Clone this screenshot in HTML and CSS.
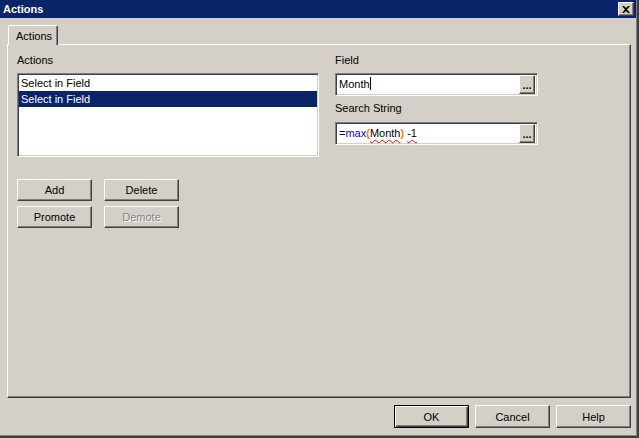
FILE: index.html
```html
<!DOCTYPE html>
<html lang="en">
<head>
  <meta charset="UTF-8">
  <title>Actions</title>
  <link rel="stylesheet" href="styles.css">
</head>
<body>
  <div class="window">
    <div class="titlebar">
      <span class="title">Actions</span>
      <button class="close" type="button">
        <svg width="8" height="7" viewBox="0 0 8 7"><path d="M0 0h2l2 2 2-2h2L5 3.5 8 7H6L4 5 2 7H0l3-3.5z" fill="#000"/></svg>
      </button>
    </div>

    <div class="body">
      <div class="tabs">
        <div class="tab">Actions</div>
      </div>

      <div class="panel">
        <div class="col-left">
          <div class="label">Actions</div>
          <div class="listbox">
            <div class="item">Select in Field</div>
            <div class="item selected">Select in Field</div>
          </div>
          <div class="btn-grid">
            <button class="btn" type="button">Add</button>
            <button class="btn" type="button">Delete</button>
            <button class="btn" type="button">Promote</button>
            <button class="btn" type="button" disabled>Demote</button>
          </div>
        </div>

        <div class="col-right">
          <div class="label">Field</div>
          <div class="field">
            <div class="field-text">Month<span class="caret"></span></div>
            <button class="dots" type="button">...</button>
          </div>
          <div class="label label-gap">Search String</div>
          <div class="field">
            <div class="field-text">=<span class="fn">max</span><span class="paren">(</span><span class="squiggle">Month</span><span class="paren">)</span> <span class="squiggle">-1</span></div>
            <button class="dots" type="button">...</button>
          </div>
        </div>
      </div>

      <div class="footer">
        <button class="btn default" type="button">OK</button>
        <button class="btn" type="button">Cancel</button>
        <button class="btn" type="button">Help</button>
      </div>
    </div>
  </div>
</body>
</html>
```

FILE: styles.css
```css
* {
  box-sizing: border-box;
}
html, body {
  margin: 0;
  padding: 0;
}
body {
  font-family: "Liberation Sans", Arial, sans-serif;
  font-size: 11px;
  color: #000;
  background: #d4d0c8;
}
.window {
  width: 639px;
  height: 438px;
  background: #d4d0c8;
  padding-right: 3px;
  box-shadow: inset -2px -2px #404040, inset -3px -3px #808080;
}
.titlebar {
  height: 18px;
  background: #0a246a;
  display: flex;
  align-items: center;
  justify-content: space-between;
  padding: 0 2px 0 3px;
}
.title {
  color: #fff;
  font-weight: bold;
  font-size: 11px;
}
.close {
  width: 16px;
  height: 14px;
  padding: 0;
  margin: 0;
  background: #d4d0c8;
  border: 1px solid;
  border-color: #fff #404040 #404040 #fff;
  box-shadow: inset -1px -1px #808080;
  display: flex;
  align-items: center;
  justify-content: center;
}
.body {
  padding: 7px 0 0 7px;
}
.tabs {
  display: flex;
  padding-left: 1px;
  position: relative;
  z-index: 1;
}
.tab {
  width: 50px;
  height: 20px;
  margin-bottom: -1px;
  padding: 4px 0 0 7px;
  background: #d4d0c8;
  border-top: 1px solid #fff;
  border-left: 1px solid #fff;
  border-right: 1px solid #404040;
  border-radius: 2px 2px 0 0;
  box-shadow: inset -1px 0 #808080;
}
.panel {
  width: 624px;
  height: 354px;
  border: 1px solid;
  border-color: #fff #404040 #404040 #fff;
  box-shadow: inset -1px -1px #808080;
  padding: 9px 0 0 9px;
  display: flex;
  gap: 16px;
}
.label {
  height: 13px;
  line-height: 13px;
  margin-bottom: 6px;
}
.label-gap {
  margin-top: 6px;
  margin-bottom: 7px;
}
.col-left {
  width: 302px;
}
.col-right {
  width: 203px;
}
.listbox {
  height: 84px;
  background: #fff;
  border: 1px solid;
  border-color: #808080 #fff #fff #808080;
  box-shadow: inset 1px 1px #404040, inset -1px -1px #d4d0c8;
  padding: 1px 1px 0 1px;
}
.item {
  height: 16px;
  line-height: 16px;
  padding-left: 2px;
}
.item.selected {
  background: #0a246a;
  color: #fff;
}
.btn-grid {
  display: grid;
  grid-template-columns: 75px 75px;
  column-gap: 12px;
  row-gap: 5px;
  margin-top: 22px;
}
.btn {
  height: 22px;
  width: 75px;
  padding: 0;
  font-family: inherit;
  font-size: 11px;
  color: #000;
  background: #d4d0c8;
  border: 1px solid;
  border-color: #fff #404040 #404040 #fff;
  box-shadow: inset -1px -1px #808080;
}
.btn:disabled {
  color: #808080;
  text-shadow: 1px 1px #fff;
}
.field {
  height: 23px;
  display: flex;
  background: #fff;
  border: 1px solid;
  border-color: #808080 #fff #fff #808080;
  box-shadow: inset 1px 1px #404040, inset -1px -1px #d4d0c8;
  padding: 2px;
}
.field-text {
  flex: 1;
  line-height: 17px;
  padding-left: 1px;
  white-space: nowrap;
}
.caret {
  display: inline-block;
  width: 1px;
  height: 13px;
  background: #000;
  vertical-align: -2px;
}
.fn {
  color: #0000ff;
}
.paren {
  color: #ff8000;
  font-weight: bold;
}
.squiggle {
  text-decoration: underline wavy #ff0000;
  text-decoration-thickness: 1px;
  text-underline-offset: 2px;
}
.dots {
  width: 16px;
  height: 19px;
  padding: 0 0 2px 0;
  margin: -1px 0 0 0;
  font-family: inherit;
  font-size: 11px;
  font-weight: bold;
  line-height: 1;
  display: flex;
  align-items: flex-end;
  justify-content: center;
  background: #d4d0c8;
  border: 1px solid;
  border-color: #fff #404040 #404040 #fff;
  box-shadow: inset -1px -1px #808080;
}
.footer {
  display: flex;
  justify-content: flex-end;
  gap: 6px;
  width: 624px;
  margin-top: 7px;
}
.footer .btn {
  height: 23px;
}
.btn.default {
  border: 1px solid #000;
  box-shadow: inset 1px 1px #fff, inset -1px -1px #404040, inset -2px -2px #808080;
}
```
